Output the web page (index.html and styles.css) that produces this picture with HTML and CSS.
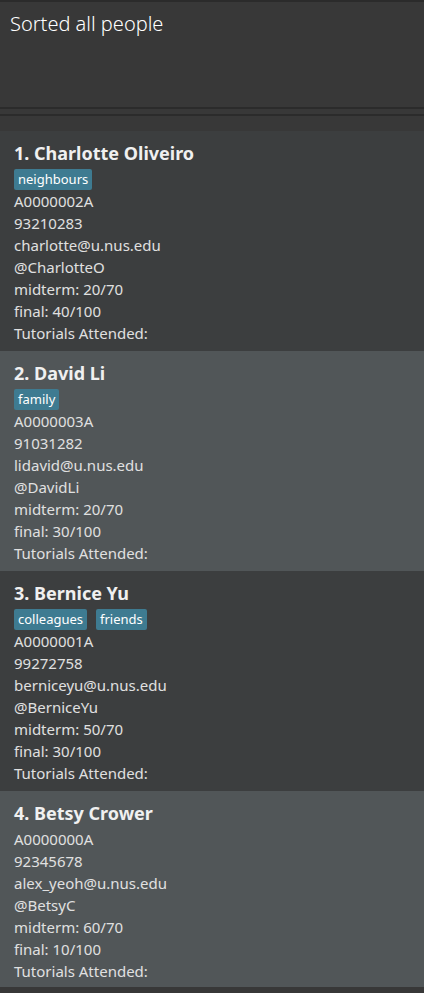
FILE: index.html
```html
<!DOCTYPE html>
<html>
<head>
<meta charset="utf-8">
<link rel="stylesheet" href="styles.css">
</head>
<body>
<div class="app">
  <div class="result">Sorted all people</div>
  <div class="divider"></div>
  <div class="list">
    <div class="card odd">
      <div class="name">1. Charlotte Oliveiro</div>
      <div class="tags"><span class="tag">neighbours</span></div>
      <div class="line">A0000002A</div>
      <div class="line">93210283</div>
      <div class="line">charlotte@u.nus.edu</div>
      <div class="line">@CharlotteO</div>
      <div class="line">midterm: 20/70</div>
      <div class="line">final: 40/100</div>
      <div class="line">Tutorials Attended:</div>
    </div>
    <div class="card even">
      <div class="name">2. David Li</div>
      <div class="tags"><span class="tag">family</span></div>
      <div class="line">A0000003A</div>
      <div class="line">91031282</div>
      <div class="line">lidavid@u.nus.edu</div>
      <div class="line">@DavidLi</div>
      <div class="line">midterm: 20/70</div>
      <div class="line">final: 30/100</div>
      <div class="line">Tutorials Attended:</div>
    </div>
    <div class="card odd">
      <div class="name">3. Bernice Yu</div>
      <div class="tags"><span class="tag">colleagues</span><span class="tag">friends</span></div>
      <div class="line">A0000001A</div>
      <div class="line">99272758</div>
      <div class="line">berniceyu@u.nus.edu</div>
      <div class="line">@BerniceYu</div>
      <div class="line">midterm: 50/70</div>
      <div class="line">final: 30/100</div>
      <div class="line">Tutorials Attended:</div>
    </div>
    <div class="card even notags">
      <div class="name">4. Betsy Crower</div>
      <div class="line">A0000000A</div>
      <div class="line">92345678</div>
      <div class="line">alex_yeoh@u.nus.edu</div>
      <div class="line">@BetsyC</div>
      <div class="line">midterm: 60/70</div>
      <div class="line">final: 10/100</div>
      <div class="line">Tutorials Attended:</div>
    </div>
  </div>
</div>
</body>
</html>
```
FILE: styles.css
```css
html, body {
  margin: 0;
  padding: 0;
  background: #383838;
}
body {
  font-family: "Noto Sans", "Open Sans", sans-serif;
  color: #e0e0e0;
}
.app {
  width: 424px;
  height: 993px;
  overflow: hidden;
  display: flex;
  flex-direction: column;
}
.result {
  border-top: 2px solid #2b2b2b;
  height: 107px;
  box-sizing: border-box;
  padding: 8px 10px 0;
  font-size: 20px;
  font-weight: 300;
  color: #ffffff;
  line-height: 28px;
  background: #383838;
}
.divider {
  height: 24px;
  border-top: 2px solid #2b2b2b;
  box-sizing: border-box;
  background: #383838;
}
.divider::after {
  content: "";
  display: block;
  margin-top: 5px;
  height: 2px;
  background: #2b2b2b;
}
.list {
  background: #383838;
}
.card {
  padding: 10px 14px 0;
  height: 220px;
  box-sizing: border-box;
}
.card.notags {
  height: 196px;
}
.odd { background: #3c3e3f; }
.even { background: #515658; }
.name {
  font-size: 18px;
  font-weight: 700;
  color: #f0f0f0;
  line-height: 24px;
}
.tags {
  display: flex;
  gap: 9px;
  margin-top: 4px;
}
.tag {
  background: #3e7b91;
  color: #ffffff;
  font-size: 13px;
  line-height: 21px;
  padding: 0 4px;
  border-radius: 2px;
}
.notags .name {
  margin-bottom: 3px;
}
.line {
  font-size: 15px;
  line-height: 22px;
  color: #e0e0e0;
}
```
